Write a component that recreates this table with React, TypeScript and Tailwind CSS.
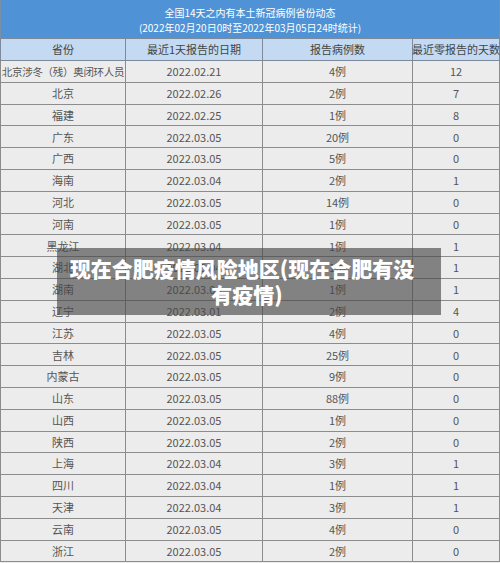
import React from "react";

const rows: [string, string, string, string][] = [
  ["北京涉冬（残）奥闭环人员", "2022.02.21", "4例", "12"],
  ["北京", "2022.02.26", "2例", "7"],
  ["福建", "2022.02.25", "1例", "8"],
  ["广东", "2022.03.05", "20例", "0"],
  ["广西", "2022.03.05", "5例", "0"],
  ["海南", "2022.03.04", "2例", "1"],
  ["河北", "2022.03.05", "14例", "0"],
  ["河南", "2022.03.05", "1例", "0"],
  ["黑龙江", "2022.03.04", "1例", "1"],
  ["湖北", "2022.03.04", "1例", "1"],
  ["湖南", "2022.03.04", "1例", "1"],
  ["辽宁", "2022.03.01", "2例", "4"],
  ["江苏", "2022.03.05", "4例", "0"],
  ["吉林", "2022.03.05", "25例", "0"],
  ["内蒙古", "2022.03.05", "9例", "0"],
  ["山东", "2022.03.05", "88例", "0"],
  ["山西", "2022.03.05", "1例", "0"],
  ["陕西", "2022.03.05", "2例", "0"],
  ["上海", "2022.03.04", "3例", "1"],
  ["四川", "2022.03.04", "1例", "1"],
  ["天津", "2022.03.04", "3例", "1"],
  ["云南", "2022.03.05", "4例", "0"],
  ["浙江", "2022.03.05", "2例", "0"],
];

const cols = "grid grid-cols-[125px_137px_150px_88px]";

export default function App() {
  return (
    <div
      className="relative w-[500px] h-[563px] overflow-hidden bg-[#ececec]"
      style={{ fontFamily: '"Noto Sans CJK SC", "Noto Sans", sans-serif' }}
    >
      <div className="h-[38px] bg-[#4f93d6] border-l border-r border-[#7a8ea6] flex flex-col items-center justify-center text-white text-[10px] leading-[15px] pt-[2px]">
        <div>全国14天之内有本土新冠病例省份动态</div>
        <div>(2022年02月20日0时至2022年03月05日24时统计)</div>
      </div>
      <div className={`${cols} h-[23px] bg-[#c3daf2] border-t border-b border-[#7d8a99] text-[11px] text-[#444]`}>
        {["省份", "最近1天报告的日期", "报告病例数", "最近零报告的天数"].map((h, i) => (
          <div
            key={h}
            className={`flex items-center justify-center whitespace-nowrap border-l border-[#7d8a99] ${i === 3 ? "border-r" : ""}`}
          >
            {h}
          </div>
        ))}
      </div>
      {rows.map((r, idx) => (
        <div
          key={idx}
          className={`${cols} h-[21.8px] border-b border-[#8c8c8c] text-[11px] text-[#555]`}
        >
          {r.map((c, i) => (
            <div
              key={i}
              className={`flex items-center justify-center whitespace-nowrap border-l border-[#8c8c8c] ${i === 3 ? "border-r" : ""} ${i === 0 && idx === 0 ? "text-[10.5px] tracking-[-0.3px]" : ""}`}
            >
              {c}
            </div>
          ))}
        </div>
      ))}
      <div className="absolute left-[57px] top-[248px] w-[384px] h-[67px] bg-[rgba(70,70,70,0.64)] flex flex-col items-center justify-center text-white font-black text-[21px] leading-[26px] pb-[2px]">
        <div className="pr-[14px]">现在合肥疫情风险地区(现在合肥有没</div>
        <div className="pr-[4px]">有疫情)</div>
      </div>
    </div>
  );
}
